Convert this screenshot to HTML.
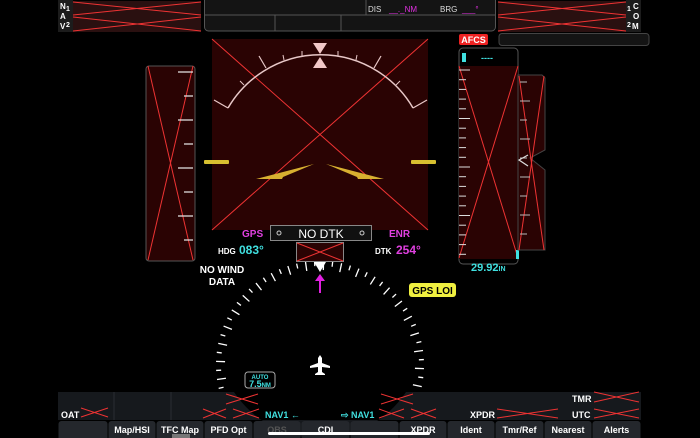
<!DOCTYPE html>
<html><head><style>
html,body{margin:0;padding:0;background:#000;width:700px;height:438px;overflow:hidden}
svg{display:block}
text{font-family:"Liberation Sans",sans-serif}
</style></head><body>
<svg id="s" width="700" height="438" viewBox="0 0 700 438">
<rect x="58" y="0" width="15" height="32" fill="#1c1c1c"/>
<text x="60" y="9" fill="#fff" font-size="8" font-weight="bold">N</text><text x="66" y="11" fill="#fff" font-size="7" font-weight="bold">1</text>
<text x="60" y="19" fill="#fff" font-size="8" font-weight="bold">A</text>
<text x="60" y="29" fill="#fff" font-size="8" font-weight="bold">V</text><text x="66" y="27" fill="#fff" font-size="7" font-weight="bold">2</text>
<rect x="73" y="1" width="128" height="31" fill="#2a1010"/>
<line x1="73" y1="2" x2="201" y2="15" stroke="#e33"/><line x1="73" y1="15" x2="201" y2="2" stroke="#e33"/>
<line x1="73" y1="17" x2="201" y2="31" stroke="#e33"/><line x1="73" y1="31" x2="201" y2="17" stroke="#e33"/>
<rect x="204.5" y="-5" width="291" height="36" rx="4" fill="#141414" stroke="#555"/>
<line x1="205" y1="15" x2="495" y2="15" stroke="#555"/>
<line x1="366" y1="0" x2="366" y2="15" stroke="#555"/>
<line x1="275" y1="15" x2="275" y2="31" stroke="#555"/><line x1="341" y1="15" x2="341" y2="31" stroke="#555"/>
<text x="368" y="12" fill="#ddd" font-size="8">DIS</text><text x="389" y="12" fill="#e030e0" font-size="8">__._NM</text>
<text x="440" y="12" fill="#ddd" font-size="8">BRG</text><text x="462" y="12" fill="#e030e0" font-size="8">___°</text>
<rect x="498" y="1" width="128" height="31" fill="#2a1010"/>
<line x1="498" y1="2" x2="626" y2="15" stroke="#e33"/><line x1="498" y1="15" x2="626" y2="2" stroke="#e33"/>
<line x1="498" y1="17" x2="626" y2="31" stroke="#e33"/><line x1="498" y1="31" x2="626" y2="17" stroke="#e33"/>
<rect x="626" y="0" width="15" height="32" fill="#1c1c1c"/>
<text x="627" y="11" fill="#fff" font-size="7" font-weight="bold">1</text><text x="633" y="9" fill="#fff" font-size="8" font-weight="bold">C</text>
<text x="633" y="19" fill="#fff" font-size="8" font-weight="bold">O</text>
<text x="627" y="27" fill="#fff" font-size="7" font-weight="bold">2</text><text x="632" y="29" fill="#fff" font-size="8" font-weight="bold">M</text>
<rect x="459" y="34" width="29" height="11" rx="2" fill="#e22"/>
<text x="473.5" y="43" fill="#fff" font-size="9" font-weight="bold" text-anchor="middle">AFCS</text>
<rect x="499" y="33.5" width="150" height="12" rx="3" fill="#141414" stroke="#444"/>
<rect x="212" y="39" width="216" height="191" fill="#2a0303"/>
<line x1="212" y1="39" x2="428" y2="230" stroke="#e33"/><line x1="428" y1="39" x2="212" y2="230" stroke="#e33"/>
<path d="M228 108 A107 107 0 0 1 413 108" fill="none" stroke="#e8c8c8" stroke-width="1.5"/>
<line x1="228" y1="108" x2="214" y2="100" stroke="#e8c8c8" stroke-width="1.2"/>
<line x1="413" y1="108" x2="427" y2="100" stroke="#e8c8c8" stroke-width="1.2"/>
<line x1="266" y1="68" x2="259" y2="56" stroke="#e8c8c8" stroke-width="1.2"/>
<line x1="374" y1="68" x2="381" y2="56" stroke="#e8c8c8" stroke-width="1.2"/>
<line x1="244" y1="85" x2="240" y2="81" stroke="#e8c8c8"/><line x1="396" y1="85" x2="400" y2="81" stroke="#e8c8c8"/>
<line x1="284" y1="60" x2="283" y2="55" stroke="#e8c8c8"/><line x1="356" y1="60" x2="357" y2="55" stroke="#e8c8c8"/>
<line x1="302" y1="56" x2="302" y2="51" stroke="#e8c8c8"/><line x1="338" y1="56" x2="338" y2="51" stroke="#e8c8c8"/>
<polygon points="313,43 327,43 320,54" fill="#f2c8c8"/><polygon points="320,57 313,68 327,68" fill="#f2c8c8"/>
<rect x="204" y="160" width="25" height="4" rx="1" fill="#d8c030"/>
<rect x="411" y="160" width="25" height="4" rx="1" fill="#d8c030"/>
<polygon points="256,179 314,164 283,177 282,179" fill="#d8b030"/>
<polygon points="384,179 326,164 357,177 358,179" fill="#d8b030"/>
<rect x="146" y="66" width="49" height="195" rx="3" fill="#2a0303" stroke="#555"/>
<line x1="148" y1="66" x2="193" y2="260" stroke="#e33"/><line x1="193" y1="66" x2="148" y2="260" stroke="#e33"/>
<g stroke="#ddd" stroke-width="1.3" id="spd"></g>
<rect x="459" y="48" width="59" height="216" rx="4" fill="#000" stroke="#555"/>
<rect x="459" y="66" width="59" height="193" fill="#2a0303"/>
<line x1="459" y1="66" x2="518" y2="258" stroke="#e33"/><line x1="518" y1="66" x2="459" y2="258" stroke="#e33"/>
<rect x="462" y="53" width="4" height="9" fill="#40e0e0"/>
<text x="481" y="61" fill="#40e0e0" font-size="9" font-weight="bold">----</text>
<g stroke="#ddd" stroke-width="1" id="alt"></g>
<rect x="516" y="250" width="3" height="9" fill="#40e0e0"/>
<text x="471" y="271" fill="#40e0e0" font-size="11" font-weight="bold">29.92<tspan font-size="7">IN</tspan></text>
<path d="M518 75 L542 75 L545 78 L545 150 L530 158 L545 170 L545 250 L518 250 Z" fill="#2a0303" stroke="#444"/>
<line x1="519" y1="76" x2="544" y2="250" stroke="#e33"/><line x1="544" y1="76" x2="519" y2="250" stroke="#e33"/>
<g stroke="#bbb" stroke-width="1" id="vs"></g>
<path d="M528 155 L519 160 L528 166" fill="none" stroke="#ddd" stroke-width="1.2"/>
<rect x="270.5" y="225.5" width="101" height="15" fill="#111" stroke="#888"/>
<circle cx="279" cy="233" r="2" fill="none" stroke="#ccc"/><circle cx="362" cy="233" r="2" fill="none" stroke="#ccc"/>
<text x="321" y="238" fill="#fff" font-size="12" text-anchor="middle">NO DTK</text>
<text x="242" y="237" fill="#e040e0" font-size="10" font-weight="bold">GPS</text>
<text x="389" y="237" fill="#e040e0" font-size="10" font-weight="bold">ENR</text>
<text x="218" y="254" fill="#fff" font-size="8" font-weight="bold">HDG</text>
<text x="239" y="254" fill="#40e0e0" font-size="12" font-weight="bold">083°</text>
<text x="375" y="254" fill="#fff" font-size="8" font-weight="bold">DTK</text>
<text x="396" y="254" fill="#e040e0" font-size="12" font-weight="bold">254°</text>
<text x="222" y="273" fill="#fff" font-size="10" font-weight="bold" text-anchor="middle">NO WIND</text>
<text x="222" y="285" fill="#fff" font-size="10" font-weight="bold" text-anchor="middle">DATA</text>
<rect x="409" y="283" width="47" height="14" rx="3" fill="#f0f040"/>
<text x="432.5" y="294" fill="#000" font-size="10" font-weight="bold" text-anchor="middle">GPS LOI</text>
<g stroke="#fff" stroke-width="1.3" id="cmp"></g>
<rect x="296.5" y="242.5" width="47" height="19" fill="#2a0303" stroke="#888"/>
<line x1="297" y1="243" x2="343" y2="261" stroke="#e33"/><line x1="343" y1="243" x2="297" y2="261" stroke="#e33"/>
<polygon points="314,262 326,262 320,272" fill="#fff"/>
<line x1="320" y1="278" x2="320" y2="293" stroke="#e020e0" stroke-width="2"/>
<polygon points="315,281 325,281 320,274" fill="#e020e0"/>
<path d="M320 355 L322 358 L322 363 L330 366 L330 368 L322 367 L322 372 L325 374 L325 375 L315 375 L315 374 L318 372 L318 367 L310 368 L310 366 L318 363 L318 358 Z" fill="#fff"/>
<rect x="245" y="372" width="30" height="16" rx="3" fill="#000" stroke="#aaa"/>
<text x="260" y="379" fill="#40e0e0" font-size="6" font-weight="bold" text-anchor="middle">AUTO</text>
<text x="260" y="387" fill="#40e0e0" font-size="9" font-weight="bold" text-anchor="middle">7.5<tspan font-size="6">NM</tspan></text>
<path d="M58 392 L234 392 A103 103 0 0 0 406 392 L641 392 L641 420 L58 420 Z" fill="#16191d"/>
<line x1="114" y1="392" x2="114" y2="420" stroke="#2a2d33"/><line x1="171" y1="392" x2="171" y2="420" stroke="#2a2d33"/>
<text x="61" y="418" fill="#fff" font-size="9" font-weight="bold">OAT</text>
<g stroke="#e33" id="xs"></g>
<text x="265" y="418" fill="#40e0e0" font-size="9" font-weight="bold">NAV1 ←</text>
<text x="341" y="418" fill="#40e0e0" font-size="9" font-weight="bold">⇨ NAV1</text>
<text x="470" y="418" fill="#fff" font-size="9" font-weight="bold">XPDR</text>
<text x="572" y="402" fill="#fff" font-size="9" font-weight="bold">TMR</text>
<text x="572" y="418" fill="#fff" font-size="9" font-weight="bold">UTC</text>
<g id="btn"></g>
<rect x="268" y="432" width="162" height="3" rx="1.5" fill="#fff"/>
<rect x="172" y="434" width="18" height="4" fill="#777"/>
</svg>
<script>
const NS="http://www.w3.org/2000/svg";
function L(g,x1,y1,x2,y2,a){const l=document.createElementNS(NS,"line");l.setAttribute("x1",x1);l.setAttribute("y1",y1);l.setAttribute("x2",x2);l.setAttribute("y2",y2);if(a)for(const k in a)l.setAttribute(k,a[k]);document.getElementById(g).appendChild(l);}
for(let y=72,i=0;y<262;y+=24,i++){L("spd",i%2?184:178,y,193,y);}
for(let y=70,i=0;y<258;y+=9.7,i++){L("alt",459,y,i%5==0?470:466,y);}
for(let y=82,i=0;y<250;y+=19,i++){L("vs",520,y,i%2?530:527,y);}
const cx=320,cy=365,R=104;
for(let d=-110;d<=110;d+=5){const a=(d-3)*Math.PI/180;const len=(Math.round((d+3)/5)%2==0)?9:5;
const x1=cx+R*Math.sin(a),y1=cy-R*Math.cos(a),x2=cx+(R-len)*Math.sin(a),y2=cy-(R-len)*Math.cos(a);if(y1<390)L("cmp",x1,y1,x2,y2);}
function X(x,y,w,h){L("xs",x,y,x+w,y+h);L("xs",x+w,y,x,y+h);}
X(81,408,27,9);X(203,409,23,9);X(233,409,26,9);X(226,394,32,10);X(381,394,32,10);X(379,409,25,9);X(411,409,25,9);X(497,409,61,9);X(594,392,45,10);X(594,409,45,9);
const b=document.getElementById("btn");const xs=[58,108,156,204,253,301,350,399,447,495,544,592,641];
const lab=["","Map/HSI","TFC Map","PFD Opt","OBS","CDI","","XPDR","Ident","Tmr/Ref","Nearest","Alerts"];
for(let i=0;i<12;i++){const r=document.createElementNS(NS,"rect");r.setAttribute("x",xs[i]+0.5);r.setAttribute("y",421);r.setAttribute("width",xs[i+1]-xs[i]-1);r.setAttribute("height",20);r.setAttribute("rx",3);r.setAttribute("fill","#24272c");b.appendChild(r);
const t=document.createElementNS(NS,"text");t.setAttribute("x",(xs[i]+xs[i+1])/2);t.setAttribute("y",433);t.setAttribute("fill",i==4?"#555":"#fff");t.setAttribute("font-size","9");t.setAttribute("font-weight","bold");t.setAttribute("text-anchor","middle");t.textContent=lab[i];b.appendChild(t);}
</script>
</body></html>
